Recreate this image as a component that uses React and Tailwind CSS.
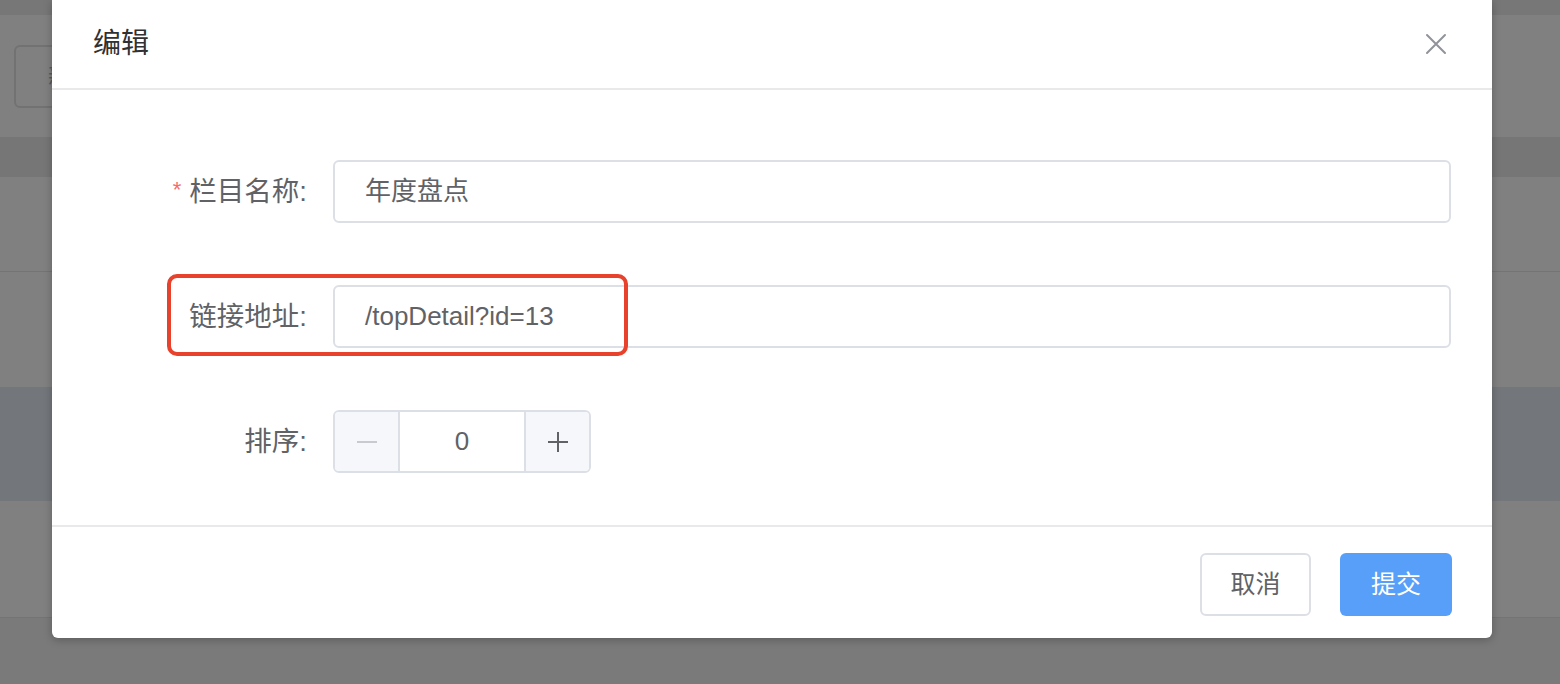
import React from "react"

const font = { fontFamily: '"Liberation Sans", "Noto Sans CJK SC", sans-serif' }

function CloseIcon() {
    return (
        <svg width="22" height="22" viewBox="0 0 22 22" fill="none" stroke="#909399" strokeWidth="2" strokeLinecap="round">
            <path d="M2 2 L20 20 M20 2 L2 20" />
        </svg>
    )
}

function FormRow({ label, required, children, marked }) {
    return (
        <div className="relative flex items-center h-[63px]">
            <div className="w-[240px] shrink-0 flex items-center justify-end pr-[26px] text-[27.5px] text-[#606266]">
                {required && <span className="text-[#f56c6c] text-[22px] mr-[8px] -mt-[4px]">*</span>}
                <span>{label}</span>
            </div>
            {children}
            {marked && (
                <div className="absolute left-[74px] top-[-11px] w-[461px] h-[82px] border-[4px] border-[#e8412c] rounded-[10px] pointer-events-none"></div>
            )}
        </div>
    )
}

function TextInput({ value }) {
    return (
        <div className="flex-1 h-[63px] flex items-center border-2 border-[#dcdfe6] rounded-[6px] pl-[30px] text-[26px] text-[#606266] bg-white">
            {value}
        </div>
    )
}

export default function App() {
    return (
        <div className="relative w-[1560px] h-[684px] overflow-hidden" style={font}>
            {/* page under the mask */}
            <div className="flex flex-col h-full">
                <div className="h-[15px] bg-[#777777]"></div>
                <div className="h-[122px] bg-[#808080] pl-[14px] pt-[30px]">
                    <div className="w-[120px] h-[63px] border-2 border-[#727272] rounded-[6px] flex items-center pl-[32px] text-[24px] text-[#5a5a5a]">
                        新增
                    </div>
                </div>
                <div className="h-[40px] bg-[#767676]"></div>
                <div className="h-[95px] bg-[#808080] border-b border-[#747474]"></div>
                <div className="h-[115px] bg-[#808080]"></div>
                <div className="h-[114px] bg-[#73767b]"></div>
                <div className="h-[117px] bg-[#808080] border-b border-[#747474]"></div>
                <div className="flex-1 bg-[#7a7a7b]"></div>
            </div>

            {/* dialog */}
            <div className="absolute top-0 left-[52px] w-[1440px] bg-white rounded-b-[6px] shadow-[0_2px_8px_rgba(0,0,0,0.25)]">
                <div className="h-[90px] flex items-center justify-between pl-[41px] pr-[45px] border-b-2 border-[#e9e9ec]">
                    <span className="text-[28px] text-[#303133]">编辑</span>
                    <CloseIcon />
                </div>

                <div className="flex flex-col gap-[62px] px-[41px] pt-[70px] pb-[52px]">
                    <FormRow label="栏目名称:" required>
                        <TextInput value="年度盘点" />
                    </FormRow>
                    <FormRow label="链接地址:" marked>
                        <TextInput value="/topDetail?id=13" />
                    </FormRow>
                    <FormRow label="排序:">
                        <div className="w-[258px] h-[63px] flex border-2 border-[#dcdfe6] rounded-[6px] overflow-hidden text-[26px]">
                            <div className="w-[65px] bg-[#f5f7fa] border-r-2 border-[#dcdfe6] flex items-center justify-center">
                                <div className="w-[20px] h-[2px] bg-[#c7cad1]"></div>
                            </div>
                            <div className="flex-1 flex items-center justify-center text-[#606266] bg-white">0</div>
                            <div className="w-[65px] bg-[#f5f7fa] border-l-2 border-[#dcdfe6] flex items-center justify-center">
                                <svg width="20" height="20" viewBox="0 0 20 20" stroke="#606266" strokeWidth="2">
                                    <path d="M10 0 V20 M0 10 H20" />
                                </svg>
                            </div>
                        </div>
                    </FormRow>
                </div>

                <div className="border-t-2 border-[#e9e9ec] flex justify-end gap-[29px] pt-[26px] pb-[22px] pr-[40px]">
                    <button className="w-[111px] h-[63px] border-2 border-[#dcdfe6] rounded-[6px] text-[25px] text-[#606266] bg-white">
                        取消
                    </button>
                    <button className="w-[112px] h-[63px] rounded-[6px] text-[25px] text-white bg-[#579ff8]">
                        提交
                    </button>
                </div>
            </div>
        </div>
    )
}
